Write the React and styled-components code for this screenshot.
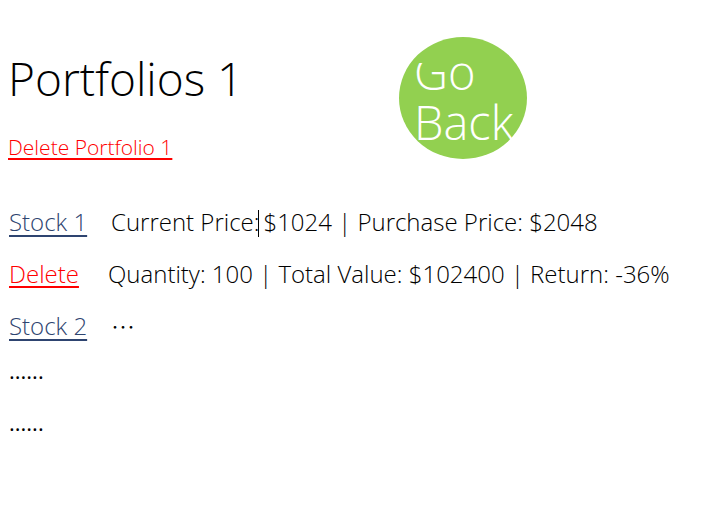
import React from 'react'
import styled, { createGlobalStyle } from 'styled-components'

const GlobalStyle = createGlobalStyle`
  body {
    margin: 0;
    background: #fff;
    font-family: "Open Sans", "Noto Sans CJK SC", sans-serif;
    font-weight: 300;
    color: #000;
  }
`

const Page = styled.div`
  padding: 0 8px;
  width: 719px;
  height: 509px;
  box-sizing: border-box;
`

const Header = styled.header`
  display: grid;
  grid-template-columns: 391px 128px;
  align-items: start;
`

const TitleBlock = styled.div`
  display: flex;
  flex-direction: column;
  align-items: flex-start;
  padding-top: 47px;
`

const Title = styled.h1`
  margin: 0;
  font-size: 46px;
  font-weight: 300;
  line-height: 62px;
`

const RedLink = styled.a`
  color: #ff0000;
  text-decoration: underline;
  text-underline-offset: 3px;
  font-size: ${p => p.$size || 21}px;
  cursor: pointer;
`

const DeletePortfolio = styled(RedLink)`
  margin-top: 24px;
`

const GoBack = styled.button`
  margin-top: 37px;
  width: 128px;
  height: 122px;
  border: none;
  border-radius: 50%;
  background: #92d050;
  padding: 0;
  display: flex;
  align-items: center;
  justify-content: center;
  cursor: pointer;
`

const GoBackLabel = styled.span`
  display: block;
  width: 100px;
  height: 81px;
  margin-left: 2px;
  margin-top: 10px;
  overflow: hidden;
  color: #fff;
  font-family: "Open Sans", sans-serif;
  font-weight: 300;
  font-size: 47px;
  line-height: 50px;
  text-align: left;
  span {
    display: block;
    margin-top: -16px;
  }
`

const Rows = styled.div`
  margin-top: 34px;
  display: flex;
  flex-direction: column;
`

const Row = styled.div`
  display: flex;
  align-items: center;
  height: 52px;
  font-size: 24px;
`

const Label = styled.div`
  width: ${p => p.$w || 100}px;
  flex: none;
  padding-left: 1px;
`

const StockLink = styled.a`
  color: #2e4470;
  text-decoration: underline;
  text-underline-offset: 4px;
  cursor: pointer;
`

const Detail = styled.span`
  white-space: nowrap;
`

const Caret = styled.span`
  display: inline-block;
  width: 1px;
  height: 27px;
  background: #000;
  vertical-align: -6px;
  margin: 0 4px 0 -1px;
`

const Ellipsis = styled.div`
  height: 52px;
  box-sizing: border-box;
  padding: 0 0 14px 1px;
  display: flex;
  align-items: center;
  font-size: 22px;
  font-weight: 400;
`

export default function App() {
  return (
    <Page>
      <GlobalStyle />
      <Header>
        <TitleBlock>
          <Title>Portfolios 1</Title>
          <DeletePortfolio>Delete Portfolio 1</DeletePortfolio>
        </TitleBlock>
        <GoBack>
          <GoBackLabel>
            <span>Go<br />Back</span>
          </GoBackLabel>
        </GoBack>
      </Header>
      <Rows>
        <Row>
          <Label $w={102}><StockLink>Stock 1</StockLink></Label>
          <Detail>Current Price:<Caret />$1024 | Purchase Price: $2048</Detail>
        </Row>
        <Row>
          <Label $w={99}><RedLink $size={24}>Delete</RedLink></Label>
          <Detail>Quantity: 100 | Total Value: $102400 | Return: -36%</Detail>
        </Row>
        <Row>
          <Label $w={102}><StockLink>Stock 2</StockLink></Label>
          <Detail>⋯</Detail>
        </Row>
        <Ellipsis>......</Ellipsis>
        <Ellipsis>......</Ellipsis>
      </Rows>
    </Page>
  )
}
